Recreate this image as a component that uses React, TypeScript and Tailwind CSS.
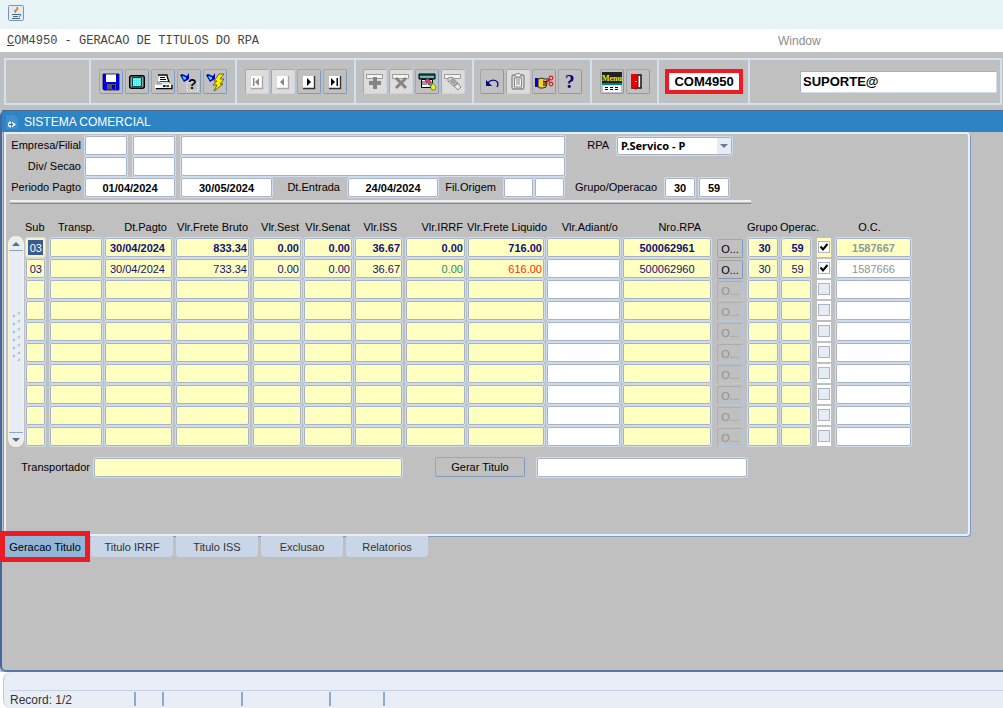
import { useState } from 'react';
import type { InputHTMLAttributes, ReactNode } from 'react';
import clsx from 'clsx';

type Row = {
  sub: string;
  pagto: string;
  bruto: string;
  sest: string;
  senat: string;
  iss: string;
  irrf: string;
  liquido: string;
  rpa: string;
  grupo: string;
  operac: string;
  oc: string;
};

const emptyRow: Row = {
  sub: '', pagto: '', bruto: '', sest: '', senat: '', iss: '',
  irrf: '', liquido: '', rpa: '', grupo: '', operac: '', oc: '',
};

const rows: Row[] = [
  {
    sub: '03', pagto: '30/04/2024', bruto: '833.34', sest: '0.00', senat: '0.00', iss: '36.67',
    irrf: '0.00', liquido: '716.00', rpa: '500062961', grupo: '30', operac: '59', oc: '1587667',
  },
  {
    sub: '03', pagto: '30/04/2024', bruto: '733.34', sest: '0.00', senat: '0.00', iss: '36.67',
    irrf: '0.00', liquido: '616.00', rpa: '500062960', grupo: '30', operac: '59', oc: '1587666',
  },
  ...Array.from({ length: 8 }, () => emptyRow),
];

const tabs = ['Geracao Titulo', 'Titulo IRRF', 'Titulo ISS', 'Exclusao', 'Relatorios'];

const columns = [
  { title: 'Sub', col: 'w-[24px]', head: 'text-left' },
  { title: 'Transp.', col: 'w-[55px]', head: 'text-center' },
  { title: 'Dt.Pagto', col: 'w-[71px]', head: 'text-right pr-2' },
  { title: 'Vlr.Frete Bruto', col: 'w-[77px]', head: 'text-right pr-1' },
  { title: 'Vlr.Sest', col: 'w-[51px]', head: 'text-right pr-1' },
  { title: 'Vlr.Senat', col: 'w-[51px]', head: 'text-right pr-1' },
  { title: 'Vlr.ISS', col: 'w-[51px]', head: 'text-right pr-2' },
  { title: 'Vlr.IRRF', col: 'w-[62px]', head: 'text-right pr-1' },
  { title: 'Vlr.Frete Liquido', col: 'w-[79px]', head: 'text-left' },
  { title: 'Vlr.Adiant/o', col: 'w-[76px]', head: 'text-right pr-1' },
  { title: 'Nro.RPA', col: 'w-[95px]', head: 'text-right pr-4' },
  { title: '', col: 'w-[30px]', head: '' },
  { title: 'Grupo', col: 'w-[33px]', head: 'text-left' },
  { title: 'Operac.', col: 'w-[37px]', head: 'text-left' },
  { title: '', col: 'w-[18px]', head: '' },
  { title: 'O.C.', col: 'w-[77px]', head: 'text-center pr-2' },
];

function Field({ className, ...props }: InputHTMLAttributes<HTMLInputElement>) {
  return (
    <input
      type="text"
      className={clsx(
        'block h-[19px] min-w-0 rounded-xs border border-[#a5b3c9] text-[11px] leading-4 shadow-[0_0_0_1px_#d0dceb] outline-none',
        className
      )}
      {...props}
    />
  );
}

function Cell({ label, value, className, pad = 'pr-[2px]' }: { label: string; value?: string; className?: string; pad?: string }) {
  return (
    <td className={clsx('py-px pl-px', pad)}>
      <Field aria-label={label} defaultValue={value} className={clsx('w-full', className)} />
    </td>
  );
}

function ToolButton({ label, disabled, children }: { label: string; disabled?: boolean; children: ReactNode }) {
  return (
    <button
      type="button"
      aria-label={label}
      disabled={disabled}
      className={clsx(
        'flex h-[25px] w-[24px] items-center justify-center rounded-xs border',
        disabled
          ? 'border-[#a8a8a8] border-r-[#c8d6e8] border-b-[#c8d6e8] bg-[#dcdcdc]'
          : 'border-[#a5a5a5] border-r-[#7d9bbd] border-b-[#7d9bbd] bg-[#c0c0c0]'
      )}
    >
      <svg viewBox="0 0 20 20" className="h-5 w-5 shrink-0 overflow-visible">
        {children}
      </svg>
    </button>
  );
}

function ToolGroup({ children, className }: { children?: ReactNode; className?: string }) {
  return (
    <div className={clsx('flex shrink-0 items-center gap-[2px] border-l-2 border-[#d3e0f0]', className)}>{children}</div>
  );
}

// Small raised page with a navigation glyph, shared by the record buttons
function NavIcon({ d, off }: { d: string; off?: boolean }) {
  return (
    <>
      <path d="M4 4h11v12H4z" fill="#fff" />
      <path d="M15.500 4v12.500H4" fill="none" stroke={off ? '#a8a8a8' : '#333'} strokeWidth="1.400" />
      <path d={d} fill={off ? '#8a8a8a' : '#000'} />
    </>
  );
}

function Toolbar() {
  return (
    <div className="bg-[#c0c0c0] pt-[6px] pr-px pb-[5px] pl-1">
      <div className="flex h-[47px] border-y-2 border-r-2 border-[#d3e0f0]">
        <ToolGroup className="w-[85px]" />
        <ToolGroup className="w-[146px] pl-2">
          <ToolButton label="Salvar">
            <path d="M2 2h15l1 1v15H3l-1-1z" fill="#0000e8" />
            <path d="M5 2h10v8H5z" fill="#fff" />
            <path d="M6 12h9v6H6z" fill="#555" />
            <path d="M11 13h3v4h-3z" fill="#0000b0" />
            <path d="M2 2h16v16H3l-1-1z" fill="none" stroke="#000070" strokeWidth=".8" />
          </ToolButton>
          <ToolButton label="Limpar tela">
            <rect x="2.700" y="3.700" width="14.600" height="12.600" rx="2" fill="#909c9c" stroke="#000" strokeWidth="1.500" />
            <rect x="5.500" y="5.500" width="9" height="9" fill="#4deaea" stroke="#005050" />
            <path d="M6 7.500h8M6 9.500h8M6 11.500h8M6 13.500h8" stroke="#d8ffff" strokeDasharray="1 1" />
          </ToolButton>
          <ToolButton label="Imprimir">
            <path d="M6 2h8l2 8H5z" fill="#fff" />
            <path d="M5 3h9v1l2 6H7" fill="none" stroke="#000" strokeWidth="1.300" />
            <path d="M7 5.500h5M7 7.500h6" stroke="#000" />
            <path d="M4 10h12l2 3H2z" fill="#ddd" />
            <path d="M2 12h16v4H2z" fill="#fff" />
            <path d="M3 16.700h16v-4" fill="none" stroke="#000" strokeWidth="1.300" />
            <path d="M3 12h6M4 10h3" stroke="#777" />
            <path d="M10 13h2v2h-2z" fill="#0000ff" />
            <path d="M12 13h2v2h-2z" fill="#00d000" />
            <path d="M14 13h2v2h-2z" fill="#ff0000" />
          </ToolButton>
          <ToolButton label="Entrar consulta">
            <path d="M1 3l2-1 5 2 2-3v6l-5 3z" fill="#0000c0" />
            <path d="M3 4l4 1v2l-2 1z" fill="#30e0f0" />
            <path d="M8 10h11v9H8z" fill="none" stroke="#f6ee55" strokeWidth="2" strokeDasharray="1 1" />
            <text x="9" y="17" fontFamily="Liberation Sans, sans-serif" fontSize="14" fontWeight="700">?</text>
          </ToolButton>
          <ToolButton label="Executar consulta">
            <path d="M1 3l2-1 5 2 2-3v6l-5 3z" fill="#0000c0" />
            <path d="M3 4l4 1v2l-2 1z" fill="#30e0f0" />
            <path d="M14 2h5l-4 5h4l-4 5h3l-9 7 3-6H8l4-4H9z" fill="#ffee00" stroke="#4d4900" strokeWidth=".8" />
          </ToolButton>
        </ToolGroup>
        <ToolGroup className="w-[119px] pl-2">
          <ToolButton label="Primeiro registro" disabled>
            <NavIcon off d="M6 6h1.500v8H6zM12 6v8l-4-4z" />
          </ToolButton>
          <ToolButton label="Registro anterior" disabled>
            <NavIcon off d="M11 6v8l-4-4z" />
          </ToolButton>
          <ToolButton label="Proximo registro">
            <NavIcon d="M8 6v8l4-4z" />
          </ToolButton>
          <ToolButton label="Ultimo registro">
            <NavIcon d="M6 6v8l4-4zM11.500 6H13v8h-1.500z" />
          </ToolButton>
        </ToolGroup>
        <ToolGroup className="w-[118px] pl-[7px]">
          <ToolButton label="Inserir registro" disabled>
            <path d="M1.500 2.500h16v4h-16z" fill="#f4f4f4" stroke="#999" />
            <path d="M8 5h4v4h4v4h-4v4H8v-4H4V9h4z" fill="#858585" />
          </ToolButton>
          <ToolButton label="Remover registro" disabled>
            <path d="M1.500 2.500h16v4h-16z" fill="#f4f4f4" stroke="#999" />
            <path d="M5 6l10 10M15 6L5 16" stroke="#858585" strokeWidth="3" />
          </ToolButton>
          <ToolButton label="Limpar registro">
            <path d="M4.500 7.500h11v8h-11z" fill="#fff" stroke="#000" />
            <path d="M2 2h16v5H2z" fill="#006b6b" stroke="#000" />
            <path d="M3 5h14" stroke="#fff" />
            <path d="M5 10h5M5 12h5" stroke="#333" />
            <path d="M8 8l3-2 4 5-3 2z" fill="#f0307a" stroke="#600" strokeWidth=".6" />
            <path d="M13 14l3-3 3 4-1 3h-3z" fill="#f3ed20" stroke="#444" strokeWidth=".6" />
            <path d="M12 13l3-3 1 2-2 3z" fill="#22c030" />
          </ToolButton>
          <ToolButton label="Editar" disabled>
            <path d="M1.500 2.500h16v4h-16z" fill="#f4f4f4" stroke="#999" />
            <path d="M5 6l4-1 9 10-3 3L5 9z" fill="#e8e8e8" stroke="#888" />
            <path d="M6 9l4-4 4 5-3 3z" fill="#a5a5a5" />
            <path d="M11 14l4-3" stroke="#888" strokeWidth="1.500" />
          </ToolButton>
        </ToolGroup>
        <ToolGroup className="w-[118px] pl-[6px]">
          <ToolButton label="Desfazer">
            <path d="M6 11c3-5 13-3 9 4" fill="none" stroke="#000080" strokeWidth="1.300" />
            <path d="M4 8v6h6z" fill="#000080" />
          </ToolButton>
          <ToolButton label="Colar" disabled>
            <rect x="4" y="3" width="12" height="14" rx="1.500" fill="#ddd" stroke="#888" strokeWidth="1.300" />
            <path d="M6.500 6h7v9h-7z" fill="#f4f4f4" stroke="#888" />
            <path d="M7 5V3l2-1.500h2L13 3v2zM8 8h4M8 10h4M8 12h4" fill="#eee" stroke="#888" />
          </ToolButton>
          <ToolButton label="Recortar">
            <path d="M1 6h3v9H1z" fill="#0000d8" />
            <path d="M4 7l4-1 2 1h5v2h-3l1 2-1 4-3 1H6l-2-1z" fill="#f2cf35" stroke="#000" strokeWidth=".8" />
            <path d="M9 9l4 1M9 11h4M9 13h3" stroke="#000" />
            <path d="M12 8l5 3M12 11l5-4" stroke="#d22" />
            <circle cx="17" cy="6" r="1.800" fill="none" stroke="#e02020" strokeWidth="1.200" />
            <circle cx="17" cy="12" r="1.800" fill="none" stroke="#e02020" strokeWidth="1.200" />
          </ToolButton>
          <ToolButton label="Ajuda">
            <text x="5" y="16" fill="#000080" fontFamily="Liberation Serif, serif" fontSize="19" fontWeight="700">?</text>
          </ToolButton>
        </ToolGroup>
        <ToolGroup className="w-[67px] pl-2">
          <ToolButton label="Menu">
            <path d="M0 0h20v11H0z" fill="#222" />
            <text x="0" y="9" fill="#f0ea18" fontFamily="Liberation Serif, serif" fontSize="8" fontWeight="700">Menu</text>
            <path d="M0 12h20" stroke="#008080" strokeWidth="2" />
            <path d="M1 13.500h18V20H1z" fill="#fff" />
            <path d="M3 15.500h15M3 17.500h15" stroke="#000" strokeDasharray="3 2" />
          </ToolButton>
          <ToolButton label="Sair">
            <path d="M4 3h9v13H4z" fill="#fff" stroke="#111" strokeWidth="1.500" />
            <path d="M3 2h7v13l-3 2-4-1z" fill="#e80000" />
            <path d="M10 3v12l-3 2.500" fill="none" stroke="#700" />
            <path d="M7 9h2v1H7z" fill="#ff0" />
          </ToolButton>
        </ToolGroup>
        <ToolGroup className="w-[91px] pl-[6px]">
          <output className="flex h-[25px] w-[78px] items-center justify-center border-4 border-[#ed1c24] bg-white text-[13px] font-bold">
            COM4950
          </output>
        </ToolGroup>
        <div className="flex min-w-0 flex-1 items-center border-l-2 border-[#d3e0f0] pr-[3px] pl-[50px]">
          <input
            type="text"
            aria-label="Usuario"
            defaultValue="SUPORTE@"
            className="h-[22px] w-full min-w-0 rounded-xs border border-[#9fb0c8] border-r-[#d0dceb] border-b-[#d0dceb] bg-white px-[2px] text-[13px] font-bold outline-none"
          />
        </div>
      </div>
    </div>
  );
}

function FormHeader() {
  const label = 'shrink-0 text-right';
  return (
    <div className="grid gap-[2px]">
      <div className="flex items-center">
        <label htmlFor="empresa" className={clsx(label, 'w-[79px] pr-1')}>Empresa/Filial</label>
        <Field id="empresa" className="w-[42px] bg-white" />
        <Field aria-label="Filial" className="ml-[6px] w-[42px] bg-white" />
        <Field aria-label="Nome da filial" className="ml-[6px] w-[384px] bg-white" />
        <label htmlFor="rpa" className={clsx(label, 'w-[44px]')}>RPA</label>
        <span className="ml-2 flex h-[18px] w-[115px] rounded-xs border border-[#9fb0c8] bg-white shadow-[0_0_0_1px_#d0dceb]">
          <select
            id="rpa"
            className="min-w-0 flex-1 appearance-none bg-transparent pl-[3px] font-['Noto_Sans',sans-serif] text-[11px] leading-4 font-bold outline-none"
          >
            <option>P.Servico - P</option>
          </select>
          <svg viewBox="0 0 14 16" className="pointer-events-none h-4 w-[14px] bg-[#e6ecf4]">
            <path d="M3 6h8l-4 4z" fill="#6a7a92" />
          </svg>
        </span>
      </div>
      <div className="flex items-center">
        <label htmlFor="divisao" className={clsx(label, 'w-[79px] pr-1')}>Div/ Secao</label>
        <Field id="divisao" className="w-[42px] bg-white" />
        <Field aria-label="Secao" className="ml-[6px] w-[42px] bg-white" />
        <Field aria-label="Nome da secao" className="ml-[6px] w-[384px] bg-white" />
      </div>
      <div className="flex items-center">
        <label htmlFor="periodo" className={clsx(label, 'w-[79px] pr-1')}>Periodo Pagto</label>
        <Field id="periodo" defaultValue="01/04/2024" className="w-[90px] bg-white text-center font-bold" />
        <Field aria-label="Periodo final" defaultValue="30/05/2024" className="ml-[6px] w-[91px] bg-white text-center font-bold" />
        <label htmlFor="entrada" className={clsx(label, 'w-[76px] pr-2')}>Dt.Entrada</label>
        <Field id="entrada" defaultValue="24/04/2024" className="w-[90px] bg-white text-center font-bold" />
        <label htmlFor="origem" className={clsx(label, 'w-[66px] pr-2')}>Fil.Origem</label>
        <Field id="origem" className="w-[29px] bg-white" />
        <Field aria-label="Filial origem" className="ml-[2px] w-[29px] bg-white" />
        <label htmlFor="grupo" className={clsx(label, 'w-[101px] pr-2')}>Grupo/Operacao</label>
        <Field id="grupo" defaultValue="30" className="w-[30px] bg-white text-center font-bold" />
        <Field aria-label="Operacao" defaultValue="59" className="ml-1 w-[30px] bg-white text-center font-bold" />
      </div>
    </div>
  );
}

function ScrollBar() {
  return (
    <div className="mt-[18px] flex h-[209px] w-[14px] flex-col items-stretch overflow-hidden rounded-full bg-[#e9eef5] shadow-[0_0_0_1px_#f5f5d4]">
      <button type="button" aria-label="Rolar para cima" className="flex h-[14px] items-center justify-center border-b border-[#8ea5c4]">
        <svg viewBox="0 0 8 4" className="h-1 w-2"><path d="M0 4h8L4 0z" fill="#5d6b80" /></svg>
      </button>
      <div className="flex flex-1 items-start justify-center pt-[60px]">
        <svg viewBox="0 0 8 50" className="h-[50px] w-2">
          {[0, 1, 2, 3, 4, 5].map((n) => (
            <path key={n} d={`M1 ${n * 8 + 6}l2-2M6 ${n * 8 + 3}l2-2`} stroke="#9badc6" strokeWidth="1.200" />
          ))}
          <path d="M6 50l2-2" stroke="#9badc6" strokeWidth="1.200" />
        </svg>
      </div>
      <button type="button" aria-label="Rolar para baixo" className="flex h-[14px] items-center justify-center border-t border-[#8ea5c4]">
        <svg viewBox="0 0 8 4" className="h-1 w-2"><path d="M0 0h8L4 4z" fill="#5d6b80" /></svg>
      </button>
    </div>
  );
}

function TitlesTable() {
  return (
    <table className="w-[887px] shrink-0 table-fixed border-collapse">
      <colgroup>
        {columns.map((c, i) => (
          <col key={i} className={c.col} />
        ))}
      </colgroup>
      <thead>
        <tr className="h-[18px] align-top">
          {columns.map((c, i) => (
            <th key={i} className={clsx('p-0 leading-4 font-normal whitespace-nowrap', c.head)}>{c.title}</th>
          ))}
        </tr>
      </thead>
      <tbody>
        {rows.map((row, i) => {
          const current = i === 0;
          const filled = row.sub !== '';
          const yellow = clsx('bg-[#ffffc0] text-[#10107a]', current && 'font-bold');
          return (
            <tr key={i} className="h-[21px]">
              <td className="py-px pr-1 pl-px">
                <Field
                  aria-label="Sub"
                  defaultValue={row.sub}
                  className={clsx(
                    'w-full text-right',
                    current ? 'border-2 border-[#f4f4c8] bg-[#3c5a8c] pr-px text-white' : clsx(yellow, 'pr-[2px]')
                  )}
                />
              </td>
              <Cell label="Transp." className={yellow} />
              <Cell label="Dt.Pagto" value={row.pagto} pad="pr-[3px]" className={clsx(yellow, 'pr-[6px] text-right')} />
              <Cell label="Vlr.Frete Bruto" value={row.bruto} pad="pr-[3px]" className={clsx(yellow, 'pr-px text-right')} />
              <Cell label="Vlr.Sest" value={row.sest} className={clsx(yellow, 'pr-px text-right')} />
              <Cell label="Vlr.Senat" value={row.senat} className={clsx(yellow, 'pr-px text-right')} />
              <Cell label="Vlr.ISS" value={row.iss} pad="pr-[3px]" className={clsx(yellow, 'pr-px text-right')} />
              <Cell
                label="Vlr.IRRF"
                value={row.irrf}
                className={clsx('bg-[#ffffc0] pr-px text-right', current ? 'font-bold text-[#10107a]' : 'text-[#2f8a62]')}
              />
              <Cell
                label="Vlr.Frete Liquido"
                value={row.liquido}
                className={clsx('bg-[#ffffc0] pr-px text-right', current ? 'font-bold text-[#10107a]' : 'text-[#ff2a12]')}
              />
              <Cell label="Vlr.Adiant/o" className={current ? 'bg-[#ffffc0]' : 'bg-white'} />
              <Cell label="Nro.RPA" value={row.rpa} pad="pr-[6px]" className={clsx(yellow, 'text-center')} />
              <td className="p-0 pr-1 align-bottom">
                <button
                  type="button"
                  disabled={!filled}
                  className={clsx(
                    'block h-[19px] w-full rounded-xs border text-[11px] leading-4',
                    filled
                      ? 'border-[#a5a5a5] border-r-[#7d9bbd] border-b-[#7d9bbd] text-black'
                      : 'border-[#adadad] border-r-[#b7c8dd] border-b-[#b7c8dd] text-[#929292]'
                  )}
                >
                  O...
                </button>
              </td>
              <Cell label="Grupo" value={row.grupo} className={clsx(yellow, 'pl-[3px] text-center')} />
              <Cell label="Operac." value={row.operac} pad="pr-[6px]" className={clsx(yellow, 'pl-[3px] text-center')} />
              <td className="py-px pr-1">
                <span className={clsx('grid h-[19px] w-[14px] grid-cols-1 justify-items-center pt-[3px]', current ? 'bg-[#ffffc0]' : 'bg-white')}>
                  <input
                    type="checkbox"
                    aria-label={`Selecionar linha ${i + 1}`}
                    defaultChecked={filled}
                    disabled={!filled}
                    className="peer col-start-1 row-start-1 h-[12px] w-[12px] appearance-none border border-[#a9b5c5] bg-white disabled:bg-[#e6ecf3]"
                  />
                  <svg viewBox="0 0 12 12" className="pointer-events-none invisible col-start-1 row-start-1 h-[12px] w-[12px] peer-checked:visible">
                    <path d="M2.500 5.500l2.500 3 4.500-5.500" fill="none" stroke="#000" strokeWidth="2" />
                  </svg>
                </span>
              </td>
              <Cell
                label="O.C."
                value={row.oc}
                pad="pr-px"
                className={clsx('text-center', current ? 'bg-[#ffffc0] font-bold text-[#8b9c9f]' : 'bg-white text-[#929292]')}
              />
            </tr>
          );
        })}
      </tbody>
    </table>
  );
}

export default function App() {
  const [activeTab, setActiveTab] = useState(tabs[0]);

  return (
    <div className="flex min-h-screen flex-col overflow-hidden bg-[#c0c0c0] font-['Liberation_Sans',Arial,sans-serif] text-[11px] text-black">
      {/* Window title */}
      <header className="flex h-[29px] items-center bg-[#e7f5f6] px-2">
        <svg viewBox="0 0 16 16" className="mb-1 h-4 w-4">
          <rect x=".5" y=".5" width="15" height="15" rx="1" fill="#e4ebf1" stroke="#7f93a8" />
          <path d="M8 8c-4-3 2-3 1-6 3 3-3 4-1 6z" fill="#e8762c" stroke="#e8762c" />
          <path d="M4 9.500h7M5 11.500h5M4 13.500h8M11 9.500c3-1 2 2 0 2" fill="none" stroke="#40688c" />
        </svg>
      </header>

      {/* Menu */}
      <nav className="flex h-[23px] items-center bg-white pl-[7px]">
        <a href="#programa" className="w-[771px] shrink-0 font-['Liberation_Mono',monospace] text-[12px] text-[#444]">
          <span className="underline">C</span>OM4950 - GERACAO DE TITULOS DO RPA
        </a>
        <a href="#window" className="text-[12px] text-[#8c8c8c]">Window</a>
      </nav>

      <Toolbar />

      {/* Application window */}
      <main className="flex flex-1 flex-col rounded-l-md border-b-2 border-l-2 border-[#5478a8] border-l-[#44689c]">
        <div className="flex h-[22px] items-center gap-[6px] border-t border-[#4a6b93] bg-[#2c84c5] pl-1 text-white">
          <svg viewBox="0 0 12 14" className="h-[14px] w-3">
            <path d="M0 0h8l4 4v10H0z" fill="#3f8fd0" />
            <path d="M5 6.500a3 3 0 1 0 0 6zM6 6.500l4 3-4 3z" fill="#fff" />
            <path d="M3 9.500h4" stroke="#2474ba" strokeWidth="1.500" />
          </svg>
          <h1 className="text-[12px]">SISTEMA COMERCIAL</h1>
        </div>

        <section className="mr-[33px] ml-[2px] rounded-r-sm border-2 border-[#e9eef5] pb-[57px] shadow-[1px_1px_0_#7b9ac0,-1px_0_0_#7b9ac0]">
          <div className="pt-[2px]">
            <FormHeader />
          </div>
          <hr className="mt-[3px] ml-1 h-1 w-[741px] border-t-2 border-b border-t-[#eef1f4] border-b-[#8a8a8a]" />

          <div className="mt-[15px] flex gap-[2px] pl-[3px]">
            <ScrollBar />
            <TitlesTable />
          </div>

          <div className="mt-[10px] flex items-center">
            <label htmlFor="transportador" className="w-[88px] shrink-0 pr-1 text-right">Transportador</label>
            <Field id="transportador" className="w-[308px] bg-[#ffffc0]" />
            <button
              type="button"
              className="ml-[33px] h-[20px] w-[90px] rounded-xs border border-[#a5a5a5] border-r-[#7d9bbd] border-b-[#7d9bbd] leading-4"
            >
              Gerar Titulo
            </button>
            <Field aria-label="Resultado" className="ml-3 w-[210px] bg-white" />
          </div>
        </section>

        <div role="tablist" className="flex gap-[3px] pl-[3px]">
          {tabs.map((tab) => (
            <button
              key={tab}
              type="button"
              role="tab"
              aria-selected={tab === activeTab}
              onClick={() => setActiveTab(tab)}
              className={clsx(
                'h-[21px] leading-4',
                tab === activeTab
                  ? 'relative mr-[3px] w-[80px] bg-[#92b6d8] outline-[5px] outline-[#ed1c24] outline-solid'
                  : 'w-[82px] rounded-b-sm bg-[#c9d6e8] text-[#333]'
              )}
            >
              {tab}
            </button>
          ))}
        </div>
      </main>

      {/* Status bar */}
      <footer className="bg-white pl-[3px]">
        <div className="flex h-[36px] flex-col rounded-l-lg border-l border-[#b8cae0] bg-[#e9eef6] pl-[6px]">
          <div className="h-[19px] border-b border-[#c3d2e6]" />
          <div className="flex h-[15px] pt-px text-[12px] leading-4 text-[#333]">
            <span className="w-[124px]">Record: 1/2</span>
            <span className="w-[28px] border-l-2 border-[#8fa9ca]" />
            <span className="w-[79px] border-l-2 border-[#8fa9ca]" />
            <span className="w-[88px] border-l-2 border-[#8fa9ca]" />
            <span className="w-[54px] border-l-2 border-[#8fa9ca]" />
            <span className="border-l-2 border-[#8fa9ca]" />
          </div>
        </div>
      </footer>
    </div>
  );
}
